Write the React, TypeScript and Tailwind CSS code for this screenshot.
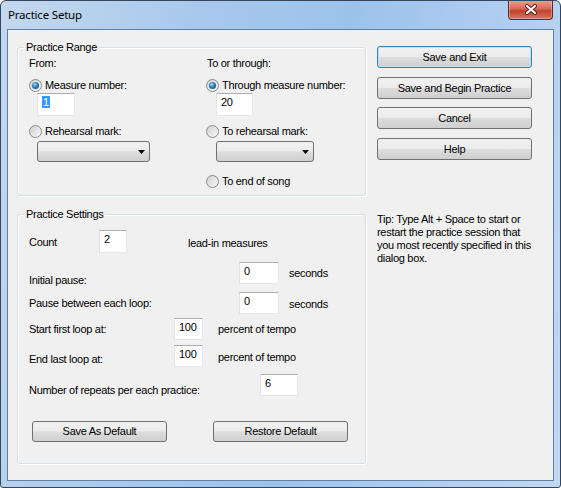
const btnFace =
  "bg-[linear-gradient(#f2f2f2_0%,#ebebeb_48%,#dddddd_52%,#cfcfcf_100%)]";

function Radio({ checked }: { checked?: boolean }) {
  return (
    <span className="flex h-[13px] w-[13px] shrink-0 items-center justify-center rounded-full border border-[#8b8b8b] bg-[linear-gradient(135deg,#cfcfcf,#f9f9f9)]">
      {checked && (
        <span className="h-[7px] w-[7px] rounded-full bg-[radial-gradient(circle_at_40%_35%,#a6dcf8_0%,#2b7cb6_45%,#0c3f6c_100%)]" />
      )}
    </span>
  );
}

function Field({ value, className, selected }: { value: string; className: string; selected?: boolean }) {
  return (
    <div
      className={`${className} shrink-0 border border-[#e3e9ef] border-t-[#abadb3] border-l-[#e2e3ea] bg-white pl-[4px] pt-[1px] leading-[14px]`}
    >
      {selected ? <span className="bg-[#3399ff] px-[1px] text-white">{value}</span> : value}
    </div>
  );
}

function Combo({ className }: { className: string }) {
  return (
    <div
      className={`${className} flex h-[21px] shrink-0 items-center justify-end rounded-[3px] border border-[#707070] pr-[4px] ${btnFace}`}
    >
      <svg width="7" height="4" viewBox="0 0 7 4" className="mt-[1px]">
        <path d="M0 0h7L3.5 4z" fill="#000" />
      </svg>
    </div>
  );
}

function Button({ label, className, primary }: { label: string; className: string; primary?: boolean }) {
  return (
    <div
      className={`${className} flex shrink-0 items-center justify-center rounded-[3px] border ${
        primary ? "border-[#3c7fb1] shadow-[inset_0_0_0_1px_#b9e4f8]" : "border-[#707070]"
      } ${btnFace}`}
    >
      {label}
    </div>
  );
}

function Group({ title, className, children }: { title: string; className: string; children: React.ReactNode }) {
  return (
    <div
      className={`${className} relative rounded-[3px] border border-[#d5dfe5] pl-[11px] shadow-[1px_1px_0_#ffffff,inset_1px_1px_0_#ffffff]`}
    >
      <span className="absolute -top-[8px] left-[6px] bg-[#f0f0f0] px-[2px] leading-[14px]">{title}</span>
      {children}
    </div>
  );
}

function CloseButton() {
  return (
    <div className="-mt-px mr-[7px] flex h-[20px] w-[45px] items-center justify-center rounded-b-[4px] border border-t-0 border-[#5e2a22] bg-[linear-gradient(#e9a796,#d46c56_45%,#c2412d_58%,#d47a63)] shadow-[inset_0_0_0_1px_rgba(255,255,255,0.3)]">
      <svg width="14" height="11" viewBox="0 0 14 11">
        <path d="M3 2l8 7M11 2l-8 7" stroke="#5a2018" strokeWidth="4" strokeLinecap="round" />
        <path d="M3 2l8 7M11 2l-8 7" stroke="#ffffff" strokeWidth="2.2" strokeLinecap="round" />
      </svg>
    </div>
  );
}

export default function App() {
  return (
    <div className="h-[488px] w-[561px] overflow-hidden rounded-t-[6px] rounded-b-[3px] border border-[#34465e] bg-[linear-gradient(100deg,#c4d8ef_0%,#a9c9ec_30%,#9cc2ec_55%,#b2cef0_80%,#c1d8f1_100%)] font-['Liberation_Sans',Arial,sans-serif] text-[11px] tracking-[-0.3px] text-black">
      {/* title bar */}
      <div className="flex h-[28px] items-start justify-between">
        <span className="pl-[7px] font-['Noto_Sans',sans-serif] text-[11.5px] leading-[28px] tracking-[-0.2px] text-black">
          Practice Setup
        </span>
        <CloseButton />
      </div>

      {/* client area */}
      <div className="mx-[6px] flex h-[452px] border border-[#5f7fa5] bg-[#f0f0f0] pl-[9px] pt-[16px]">
        <div className="w-[349px] shrink-0">
          <Group title="Practice Range" className="mt-[1px] h-[149px] pt-[8px]">
            <div className="flex">
              <div className="w-[177px]">
                <div className="h-[14px] leading-[14px]">From:</div>
                <div className="mt-[8px] flex h-[14px] items-center gap-[3px]">
                  <Radio checked />
                  <span>Measure number:</span>
                </div>
                <Field value="1" selected className="ml-[8px] mt-[1px] h-[23px] w-[38px]" />
                <div className="mt-[8px] flex h-[14px] items-center gap-[3px]">
                  <Radio />
                  <span>Rehearsal mark:</span>
                </div>
                <Combo className="ml-[8px] mt-[3px] w-[113px]" />
              </div>
              <div>
                <div className="h-[14px] pl-[1px] leading-[14px]">To or through:</div>
                <div className="mt-[8px] flex h-[14px] items-center gap-[3px]">
                  <Radio checked />
                  <span>Through measure number:</span>
                </div>
                <Field value="20" className="ml-[10px] mt-[1px] h-[23px] w-[37px]" />
                <div className="mt-[8px] flex h-[14px] items-center gap-[3px]">
                  <Radio />
                  <span>To rehearsal mark:</span>
                </div>
                <Combo className="ml-[10px] mt-[3px] w-[98px]" />
                <div className="mt-[12px] flex h-[14px] items-center gap-[3px]">
                  <Radio />
                  <span>To end of song</span>
                </div>
              </div>
            </div>
          </Group>

          <Group title="Practice Settings" className="mt-[18px] h-[250px] pt-[15px]">
            <div className="flex h-[23px]">
              <span className="mt-[5px] w-[70px] leading-[14px]">Count</span>
              <Field value="2" className="h-[23px] w-[28px]" />
              <span className="ml-[61px] mt-[6px] leading-[14px]">lead-in measures</span>
            </div>
            <div className="mt-[9px] flex h-[22px]">
              <span className="mt-[11px] w-[210px] leading-[14px]">Initial pause:</span>
              <Field value="0" className="h-[22px] w-[40px]" />
              <span className="ml-[10px] mt-[4px] leading-[14px]">seconds</span>
            </div>
            <div className="mt-[8px] flex h-[22px]">
              <span className="mt-[4px] w-[210px] leading-[14px]">Pause between each loop:</span>
              <Field value="0" className="h-[22px] w-[40px]" />
              <span className="ml-[10px] mt-[5px] leading-[14px]">seconds</span>
            </div>
            <div className="mt-[4px] flex h-[22px]">
              <span className="mt-[4px] w-[145px] leading-[14px]">Start first loop at:</span>
              <Field value="100" className="h-[22px] w-[29px]" />
              <span className="ml-[15px] mt-[4px] leading-[14px]">percent of tempo</span>
            </div>
            <div className="mt-[5px] flex h-[22px]">
              <span className="mt-[7px] w-[145px] leading-[14px]">End last loop at:</span>
              <Field value="100" className="h-[22px] w-[29px]" />
              <span className="ml-[15px] mt-[5px] leading-[14px]">percent of tempo</span>
            </div>
            <div className="mt-[7px] flex h-[22px]">
              <span className="mt-[9px] w-[231px] leading-[14px]">Number of repeats per each practice:</span>
              <Field value="6" className="h-[22px] w-[38px]" />
            </div>
            <div className="mt-[25px] flex gap-[46px] pl-[3px]">
              <Button label="Save As Default" className="h-[21px] w-[135px]" />
              <Button label="Restore Default" className="h-[21px] w-[135px]" />
            </div>
          </Group>
        </div>

        <div className="ml-[11px] flex flex-col">
          <Button label="Save and Exit" primary className="h-[22px] w-[155px]" />
          <Button label="Save and Begin Practice" className="mt-[9px] h-[22px] w-[155px]" />
          <Button label="Cancel" className="mt-[8px] h-[22px] w-[155px]" />
          <Button label="Help" className="mt-[9px] h-[22px] w-[155px]" />
          <p className="mt-[53px] whitespace-nowrap leading-[13px]">
            Tip: Type Alt + Space to start or
            <br />
            restart the practice session that
            <br />
            you most recently specified in this
            <br />
            dialog box.
          </p>
        </div>
      </div>
    </div>
  );
}
